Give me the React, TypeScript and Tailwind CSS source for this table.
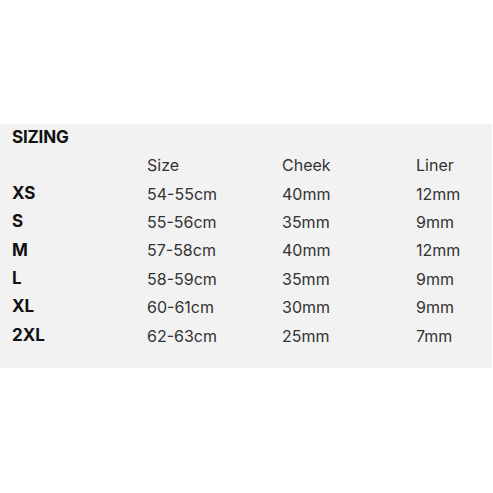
import { Fragment } from "react";

const rows = [
  { size: "XS", head: "54-55cm", cheek: "40mm", liner: "12mm" },
  { size: "S", head: "55-56cm", cheek: "35mm", liner: "9mm" },
  { size: "M", head: "57-58cm", cheek: "40mm", liner: "12mm" },
  { size: "L", head: "58-59cm", cheek: "35mm", liner: "9mm" },
  { size: "XL", head: "60-61cm", cheek: "30mm", liner: "9mm" },
  { size: "2XL", head: "62-63cm", cheek: "25mm", liner: "7mm" },
];

export default function App() {
  return (
    <div className="w-[493px] h-[493px] bg-white" style={{ fontFamily: "Inter, 'Noto Sans', sans-serif" }}>
      <div className="h-[124px]" />
      <section className="w-[492px] bg-[#f2f2f2] pl-3 pb-[18px]">
        <h2 className="h-[27px] flex items-center text-[17px] font-bold text-[#111] tracking-[-0.2px]">SIZING</h2>
        <div className="grid grid-cols-[135px_135px_134px_1fr] auto-rows-[28.4px] items-center text-[16px] text-[#333]">
          <div />
          <div>Size</div>
          <div>Cheek</div>
          <div>Liner</div>
          {rows.map((r) => (
            <Fragment key={r.size}>
              <div className="font-bold text-[#111] text-[17px]">{r.size}</div>
              <div>{r.head}</div>
              <div>{r.cheek}</div>
              <div>{r.liner}</div>
            </Fragment>
          ))}
        </div>
      </section>
    </div>
  );
}
